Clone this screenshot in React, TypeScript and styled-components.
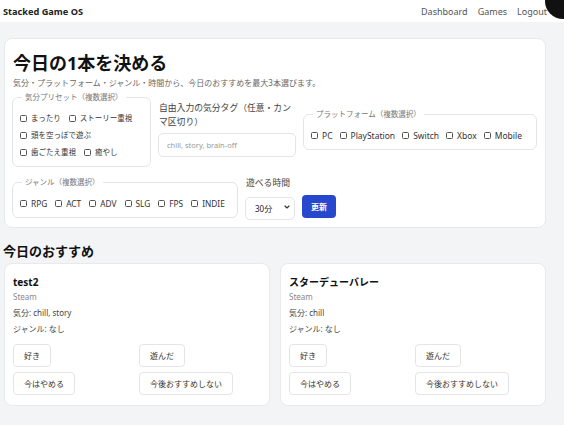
import React from "react";
import styled, { createGlobalStyle } from "styled-components";
import { ChevronDown } from "lucide-react";

const Global = createGlobalStyle`
  html, body { margin: 0; padding: 0; }
  body {
    background: #f3f4f6;
    font-family: "Noto Sans", "Noto Sans CJK JP", sans-serif;
    color: #222;
    overflow: hidden;
  }
  * { box-sizing: border-box; }
`;

const Header = styled.header`
  height: 22px;
  background: #ffffff;
  display: flex;
  align-items: center;
  justify-content: space-between;
  padding: 0 17px 0 3px;
`;

const Brand = styled.div`
  font-size: 9.2px;
  font-weight: 700;
  color: #222;
`;

const Nav = styled.nav`
  display: flex;
  gap: 10px;
`;

const NavLink = styled.a`
  font-size: 9px;
  color: #555;
  text-decoration: none;
`;

const Blob = styled.div`
  position: fixed;
  top: -17px;
  right: -17px;
  width: 36px;
  height: 36px;
  border-radius: 50%;
  background: #111;
`;

const Main = styled.main`
  width: 542px;
  margin: 16px 0 0 4px;
`;

const Panel = styled.section`
  background: #fff;
  border: 1px solid #e8e9ec;
  border-radius: 8px;
  padding: 13px 7px 9px;
`;

const Title = styled.h1`
  margin: 0 0 0 1px;
  font-size: 18px;
  line-height: 23px;
  font-weight: 700;
  color: #111;
`;

const Sub = styled.p`
  margin: 2px 0 0 1px;
  font-size: 8px;
  line-height: 12px;
  color: #666;
`;

const Form = styled.div`
  margin-top: 3px;
  display: flex;
  flex-wrap: wrap;
  align-items: center;
  column-gap: 7px;
  row-gap: 10px;
`;

const Fieldset = styled.fieldset<{ $w?: number; $size: number }>`
  margin: 0;
  padding: 8px 7px 5px;
  border: 1px solid #e3e5e8;
  border-radius: 6px;
  width: ${(p) => (p.$w ? `${p.$w}px` : "auto")};
  font-size: ${(p) => p.$size}px;
  overflow: hidden;
  min-width: 0;
`;

const Legend = styled.legend`
  padding: 0 3px;
  margin-left: 2px;
  font-size: 7.5px;
  line-height: 10px;
  color: #777;
`;

const Options = styled.div<{ $nowrap?: boolean; $gap: number }>`
  display: flex;
  flex-wrap: ${(p) => (p.$nowrap ? "nowrap" : "wrap")};
  column-gap: ${(p) => p.$gap}px;
`;

const Option = styled.label`
  display: flex;
  align-items: center;
  line-height: 17px;
  color: #333;
  white-space: nowrap;
`;

const Box = styled.input`
  appearance: none;
  margin: 0 4px 0 0;
  width: 7px;
  height: 7px;
  border: 1px solid #555;
  border-radius: 1.5px;
  background: #fff;
  flex: none;
`;

const Group = styled.div<{ $w?: number }>`
  display: flex;
  flex-direction: column;
  gap: 4px;
  width: ${(p) => (p.$w ? `${p.$w}px` : "auto")};
`;

const FieldLabel = styled.label`
  font-size: 8.8px;
  line-height: 13.5px;
  color: #444;
  padding-left: 1px;
`;

const TextInput = styled.input`
  height: 24px;
  width: 100%;
  border: 1px solid #e3e5e8;
  border-radius: 5px;
  padding: 0 8px;
  font-family: inherit;
  font-size: 7.5px;
  &::placeholder { color: #999; }
`;

const Controls = styled.div`
  display: flex;
  align-items: center;
  gap: 7px;
`;

const SelectWrap = styled.div`
  position: relative;
  width: 50px;
  height: 23px;
`;

const Select = styled.select`
  appearance: none;
  width: 100%;
  height: 100%;
  border: 1px solid #e3e5e8;
  border-radius: 5px;
  background: #fff;
  padding: 0 0 0 9px;
  font-family: inherit;
  font-size: 8px;
  color: #222;
`;

const Chevron = styled(ChevronDown)`
  position: absolute;
  right: 4px;
  top: 8px;
  pointer-events: none;
`;

const Primary = styled.button`
  height: 23px;
  width: 34px;
  border: none;
  border-radius: 4px;
  background: #2747cc;
  color: #fff;
  font-family: inherit;
  font-size: 8px;
  font-weight: 700;
  padding: 0;
`;

const SectionTitle = styled.h2`
  margin: 14px 0 0 -1px;
  font-size: 13px;
  line-height: 18px;
  font-weight: 700;
  color: #111;
`;

const Cards = styled.div`
  margin-top: 3px;
  display: grid;
  grid-template-columns: 1fr 1fr;
  gap: 10px;
`;

const Card = styled.article`
  background: #fff;
  border: 1px solid #e8e9ec;
  border-radius: 8px;
  padding: 11px 8px 10px;
`;

const CardTitle = styled.div`
  font-size: 10px;
  line-height: 14px;
  font-weight: 700;
  color: #111;
`;

const Meta = styled.div<{ $muted?: boolean }>`
  font-size: 8px;
  line-height: 16px;
  color: ${(p) => (p.$muted ? "#888" : "#444")};
`;

const Actions = styled.div`
  margin-top: 7px;
  display: grid;
  grid-template-columns: 1fr 1fr;
  column-gap: 4px;
  row-gap: 5px;
  justify-items: start;
`;

const Ghost = styled.button`
  height: 23px;
  padding: 0 10px;
  border: 1px solid #e3e5e8;
  border-radius: 4px;
  background: #fff;
  font-family: inherit;
  font-size: 8px;
  color: #333;
`;

const moods = ["まったり", "ストーリー重視", "頭を空っぽで遊ぶ", "歯ごたえ重視", "癒やし"];
const platforms = ["PC", "PlayStation", "Switch", "Xbox", "Mobile"];
const genres = ["RPG", "ACT", "ADV", "SLG", "FPS", "INDIE"];

const recs = [
  { title: "test2", platform: "Steam", mood: "chill, story", genre: "なし" },
  { title: "スターデューバレー", platform: "Steam", mood: "chill", genre: "なし" },
];

function Checks({ items, nowrap, gap = 8 }: { items: string[]; nowrap?: boolean; gap?: number }) {
  return (
    <Options $nowrap={nowrap} $gap={gap}>
      {items.map((t) => (
        <Option key={t}>
          <Box type="checkbox" />
          {t}
        </Option>
      ))}
    </Options>
  );
}

export default function App() {
  return (
    <>
      <Global />
      <Header>
        <Brand>Stacked Game OS</Brand>
        <Nav>
          <NavLink href="#">Dashboard</NavLink>
          <NavLink href="#">Games</NavLink>
          <NavLink href="#">Logout</NavLink>
        </Nav>
      </Header>
      <Blob />
      <Main>
        <Panel>
          <Title>今日の1本を決める</Title>
          <Sub>気分・プラットフォーム・ジャンル・時間から、今日のおすすめを最大3本選びます。</Sub>
          <Form>
            <Fieldset $w={139} $size={7.5}>
              <Legend>気分プリセット（複数選択）</Legend>
              <Checks items={moods} />
            </Fieldset>
            <Group $w={138}>
              <FieldLabel>自由入力の気分タグ（任意・カンマ区切り）</FieldLabel>
              <TextInput placeholder="chill, story, brain-off" />
            </Group>
            <Fieldset $w={234} $size={8.5}>
              <Legend>プラットフォーム（複数選択）</Legend>
              <Checks items={platforms} nowrap gap={7} />
            </Fieldset>
            <Fieldset $w={226} $size={8.3}>
              <Legend>ジャンル（複数選択）</Legend>
              <Checks items={genres} nowrap gap={8} />
            </Fieldset>
            <Group>
              <FieldLabel>遊べる時間</FieldLabel>
              <Controls>
                <SelectWrap>
                  <Select defaultValue="30">
                    <option value="30">30分</option>
                    <option value="60">60分</option>
                  </Select>
                  <Chevron size={8} strokeWidth={3.5} color="#333" />
                </SelectWrap>
                <Primary>更新</Primary>
              </Controls>
            </Group>
          </Form>
        </Panel>
        <SectionTitle>今日のおすすめ</SectionTitle>
        <Cards>
          {recs.map((r) => (
            <Card key={r.title}>
              <CardTitle>{r.title}</CardTitle>
              <Meta $muted>{r.platform}</Meta>
              <Meta>気分: {r.mood}</Meta>
              <Meta>ジャンル: {r.genre}</Meta>
              <Actions>
                <Ghost>好き</Ghost>
                <Ghost>遊んだ</Ghost>
                <Ghost>今はやめる</Ghost>
                <Ghost>今後おすすめしない</Ghost>
              </Actions>
            </Card>
          ))}
        </Cards>
      </Main>
    </>
  );
}
